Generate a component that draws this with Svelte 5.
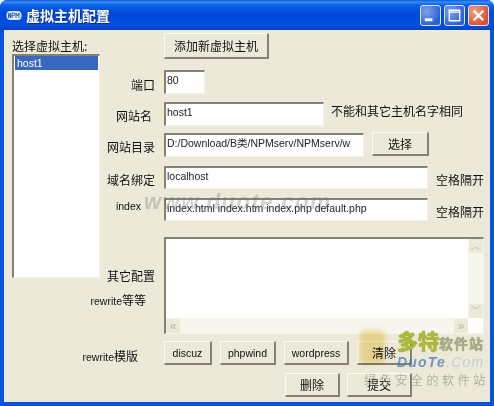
<script>
  const hosts = ['host1'];
  const templates = ['discuz', 'phpwind', 'wordpress', '清除'];
</script>

<div class="window">
  <header class="titlebar">
    <svg class="appicon" viewBox="0 0 16 11" width="16" height="11" aria-hidden="true">
      <rect x="0.5" y="1" width="15" height="9" rx="4" fill="#dfe9fb" />
      <path d="M2.5 8V3l2 5V3M6 8V3h1.6a1.2 1.2 0 0 1 0 2.6H6M10 8V3l1.5 3L13 3v5" fill="none" stroke="#1d4fb5" stroke-width="0.9" />
    </svg>
    <span class="title">虚拟主机配置</span>
    <div class="controls">
      <span class="ctl"><svg viewBox="0 0 20 20" aria-hidden="true"><rect x="4" y="13" width="8" height="3" fill="#fff" /></svg></span>
      <span class="ctl"><svg viewBox="0 0 20 20" aria-hidden="true"><path d="M4.5 4.5h11v11h-11zM4.5 6.5h11" fill="none" stroke="#fff" stroke-width="1.4" /></svg></span>
      <span class="ctl close"><svg viewBox="0 0 20 20" aria-hidden="true"><path d="M5 5l10 10M15 5L5 15" stroke="#fff" stroke-width="2.4" /></svg></span>
    </div>
  </header>

  <div class="client">
    <aside class="side">
      <div class="side-label">选择虚拟主机:</div>
      <ul class="list">
        {#each hosts as h}
          <li class="sel latin">{h}</li>
        {/each}
      </ul>
    </aside>

    <main class="form">
      <div class="row r-add">
        <span class="lab"></span>
        <button class="btn add">添加新虚拟主机</button>
      </div>
      <div class="row r-port">
        <span class="lab l-port">端口</span>
        <div class="field port latin">80</div>
      </div>
      <div class="row r-name">
        <span class="lab l-name">网站名</span>
        <div class="field name latin">host1</div>
        <span class="hint">不能和其它主机名字相同</span>
      </div>
      <div class="row r-dir">
        <span class="lab l-std">网站目录</span>
        <div class="field dir latin">D:/Download/B类/NPMserv/NPMserv/w</div>
        <button class="btn pick">选择</button>
      </div>
      <div class="row r-domain">
        <span class="lab l-std">域名绑定</span>
        <div class="field wide latin">localhost</div>
        <span class="hint h2">空格隔开</span>
      </div>
      <div class="row r-index">
        <span class="lab l-index latin">index</span>
        <div class="field wide latin">index.html index.htm index.php default.php</div>
        <span class="hint h2">空格隔开</span>
      </div>
      <div class="row r-area">
        <div class="lab area-lab">
          <span class="a1">其它配置</span>
          <span class="a2"><span class="latin">rewrite</span>等等</span>
        </div>
        <div class="area">
          <div class="sb-v">
            <span class="arrow">︿</span>
            <span class="arrow">﹀</span>
          </div>
          <div class="sb-h">
            <span class="arrow h">«</span>
            <span class="arrow h">»</span>
          </div>
        </div>
      </div>
      <div class="row r-tpl">
        <span class="lab l-tpl"><span><span class="latin">rewrite</span>模版</span></span>
        <div class="btns">
          {#each templates as t}
            <button class="btn tpl" class:clear={t === '清除'}>{t}</button>
          {/each}
        </div>
      </div>
      <div class="row r-act">
        <button class="btn del">删除</button>
        <button class="btn sub">提交</button>
      </div>
    </main>
  </div>

  <div class="wm-mid" aria-hidden="true">www.duote.com</div>
  <div class="wm" aria-hidden="true">
    <span class="folder"></span>
    <span class="wm1">多特<small>软件站</small></span>
    <span class="wm2">DuoTe<i>.Com</i></span>
    <span class="wm3">绿色安全的软件站</span>
  </div>
</div>

<style>
  :global(body) { margin: 0; background: #fff; }
  .window {
    position: relative;
    width: 494px;
    height: 406px;
    box-sizing: border-box;
    overflow: hidden;
    border-radius: 7px 7px 0 0;
    background: #0553e0;
    font-family: "Noto Sans CJK SC", "Liberation Sans", sans-serif;
    font-size: 12px;
    color: #111;
    display: flex;
    flex-direction: column;
  }
  .titlebar {
    height: 30px;
    flex: none;
    box-sizing: border-box;
    display: flex;
    align-items: center;
    padding: 0 5px 0 6px;
    background: linear-gradient(#0a5cd8 0, #3b8cf5 2px, #0a60e8 5px, #0048d8 14px, #0050e4 24px, #0443c0 30px);
  }
  .appicon { margin-right: 4px; flex: none; }
  .title { color: #fff; font-weight: 700; font-size: 14px; line-height: 14px; letter-spacing: 0; text-shadow: 1px 1px 0 #0a2f8c; }
  .controls { margin-left: auto; display: flex; gap: 3px; }
  .ctl {
    width: 19px; height: 19px;
    border: 1px solid #dfe8fb;
    border-radius: 3px;
    background: radial-gradient(circle at 30% 30%, #7ea4ee, #2a5fd6 75%);
    display: block;
  }
  .ctl svg { display: block; width: 100%; height: 100%; }
  .ctl.close { background: radial-gradient(circle at 30% 30%, #f0a48a, #d9502c 75%); }

  .client {
    flex: none;
    height: 372px;
    margin: 0 4px;
    box-sizing: border-box;
    background: #ece9d8;
    display: flex;
    color: #111;
  }
  .side { width: 92px; flex: none; padding: 8px 0 0 8px; box-sizing: content-box; }
  .side-label { height: 16px; line-height: 16px; white-space: nowrap; font-size: 12px; }
  .list {
    list-style: none;
    margin: 0;
    padding: 0 1px;
    width: 88px;
    height: 224px;
    box-sizing: border-box;
    background: #fff;
    border-top: 2px solid #858273;
    border-left: 2px solid #858273;
    border-right: 1px solid #f5f4ec;
    border-bottom: 1px solid #f5f4ec;
  }
  .sel { background: #3668bd; color: #fff; height: 14px; line-height: 14px; padding-left: 2px; }
  .latin { font-family: "Liberation Sans", "Noto Sans CJK SC", sans-serif; font-size: 10.5px; }

  .form { flex: 1; min-width: 0; }
  .row { display: flex; align-items: flex-start; }
  .lab {
    width: 60px; flex: none; box-sizing: border-box;
    display: flex; justify-content: flex-end;
    white-space: nowrap; line-height: 16px;
  }
  .r-add { margin-top: 3px; }
  .r-port { margin-top: 11px; }
  .r-name { margin-top: 8px; }
  .r-dir { margin-top: 7px; }
  .r-domain { margin-top: 9px; }
  .r-index { margin-top: 9px; }
  .r-area { margin-top: 16px; }
  .r-tpl { margin-top: 7px; }
  .r-act { margin-top: 8px; padding-left: 181px; gap: 7px; }

  .l-port { padding-right: 9px; padding-top: 7px; }
  .l-name { padding-right: 12px; padding-top: 6px; }
  .l-std { padding-right: 9px; padding-top: 6px; }
  .l-index { padding-right: 23px; }
  .l-tpl { padding-right: 26px; padding-top: 7px; }

  .field {
    height: 24px;
    box-sizing: border-box;
    background: #fff;
    border-top: 2px solid #858273;
    border-left: 2px solid #858273;
    border-right: 1px solid #f5f4ec;
    border-bottom: 1px solid #f5f4ec;
    padding: 1px 1px 0;
    line-height: 14px;
    white-space: nowrap;
    overflow: hidden;
    color: #222;
  }
  .port { width: 41px; }
  .name { width: 160px; }
  .dir { width: 200px; }
  .wide { width: 264px; height: 23px; }
  .hint { margin-left: 7px; line-height: 16px; padding-top: 1px; white-space: nowrap; }
  .h2 { margin-left: 8px; padding-top: 6px; }

  .btn {
    height: 24px;
    box-sizing: border-box;
    margin: 0;
    padding: 0;
    background: #ece9d8;
    color: #111;
    font-family: "Noto Sans CJK SC", "Liberation Sans", sans-serif;
    font-size: 12px;
    border-top: 1px solid #fbfaf3;
    border-left: 1px solid #fbfaf3;
    border-right: 2px solid #858273;
    border-bottom: 2px solid #858273;
    border-radius: 0;
    white-space: nowrap;
  }
  .add { width: 105px; height: 26px; }
  .pick { width: 57px; margin-left: 8px; margin-top: -1px; }
  .btns { display: flex; gap: 8px; }
  .tpl { font-family: "Liberation Sans", "Noto Sans CJK SC", sans-serif; font-size: 10.5px; }
  .tpl:nth-child(1) { width: 48px; }
  .tpl:nth-child(2) { width: 56px; }
  .tpl:nth-child(3) { width: 65px; }
  .tpl.clear { width: 55px; font-size: 12px; font-family: "Noto Sans CJK SC", sans-serif; }
  .del { width: 55px; }
  .sub { width: 65px; }

  .area-lab { display: flex; flex-direction: column; align-items: flex-end; justify-content: flex-start; height: 97px; }
  .a1 { margin-top: 31px; padding-right: 9px; }
  .a2 { margin-top: 8px; padding-right: 18px; }
  .area {
    position: relative;
    width: 320px;
    height: 97px;
    box-sizing: border-box;
    background: #fff;
    border-top: 2px solid #858273;
    border-left: 2px solid #858273;
    border-right: 1px solid #f5f4ec;
    border-bottom: 1px solid #f5f4ec;
  }
  .sb-v {
    position: absolute; right: 0; top: 0; bottom: 15px; width: 15px;
    background: #f6f5ee;
    display: flex; flex-direction: column; justify-content: space-between; align-items: center;
  }
  .sb-h {
    position: absolute; left: 0; right: 15px; bottom: 0; height: 15px;
    background: #f6f5ee;
    display: flex; justify-content: space-between; align-items: center;
  }
  .arrow {
    width: 14px; height: 14px; line-height: 14px; text-align: center;
    background: #ece9d8; color: #b9b7a8; font-size: 9px; display: block; overflow: hidden;
    font-family: "Liberation Sans", "Noto Sans CJK SC", sans-serif;
  }
  .arrow.h { font-size: 12px; }

  .wm-mid {
    position: absolute; left: 144px; top: 190px;
    font: italic 700 22px/24px "Liberation Sans", sans-serif;
    letter-spacing: 1.5px;
    color: rgba(110, 108, 95, 0.3);
    pointer-events: none;
    white-space: nowrap;
  }
  .wm { position: absolute; left: 360px; top: 325px; width: 134px; height: 80px; pointer-events: none; }
  .folder {
    position: absolute; left: 0; top: 5px; width: 25px; height: 34px;
    background: #f6dc8c; opacity: 0.75; border-radius: 5px; filter: blur(2px);
    mix-blend-mode: multiply;
  }
  .wm1 {
    position: absolute; left: 37px; top: 3px; white-space: nowrap;
    color: #b0b83a; font-weight: 900; font-size: 21px; line-height: 24px;
    text-shadow: 0 0 1px #7e8c20;
  }
  .wm1 small { font-size: 14px; color: #a8a894; font-weight: 700; letter-spacing: 1px; }
  .wm2 {
    position: absolute; left: 37px; top: 29px; white-space: nowrap;
    font: italic 700 14px/16px "Liberation Sans", sans-serif;
    letter-spacing: 1.2px; color: rgba(70, 120, 190, 0.75);
  }
  .wm2 i { color: rgba(170, 190, 215, 0.6); font-weight: 400; }
  .wm3 {
    position: absolute; left: 4px; top: 48px; white-space: nowrap;
    font-size: 12px; line-height: 14px; letter-spacing: 3.6px; color: rgba(130, 128, 112, 0.55);
  }
</style>
